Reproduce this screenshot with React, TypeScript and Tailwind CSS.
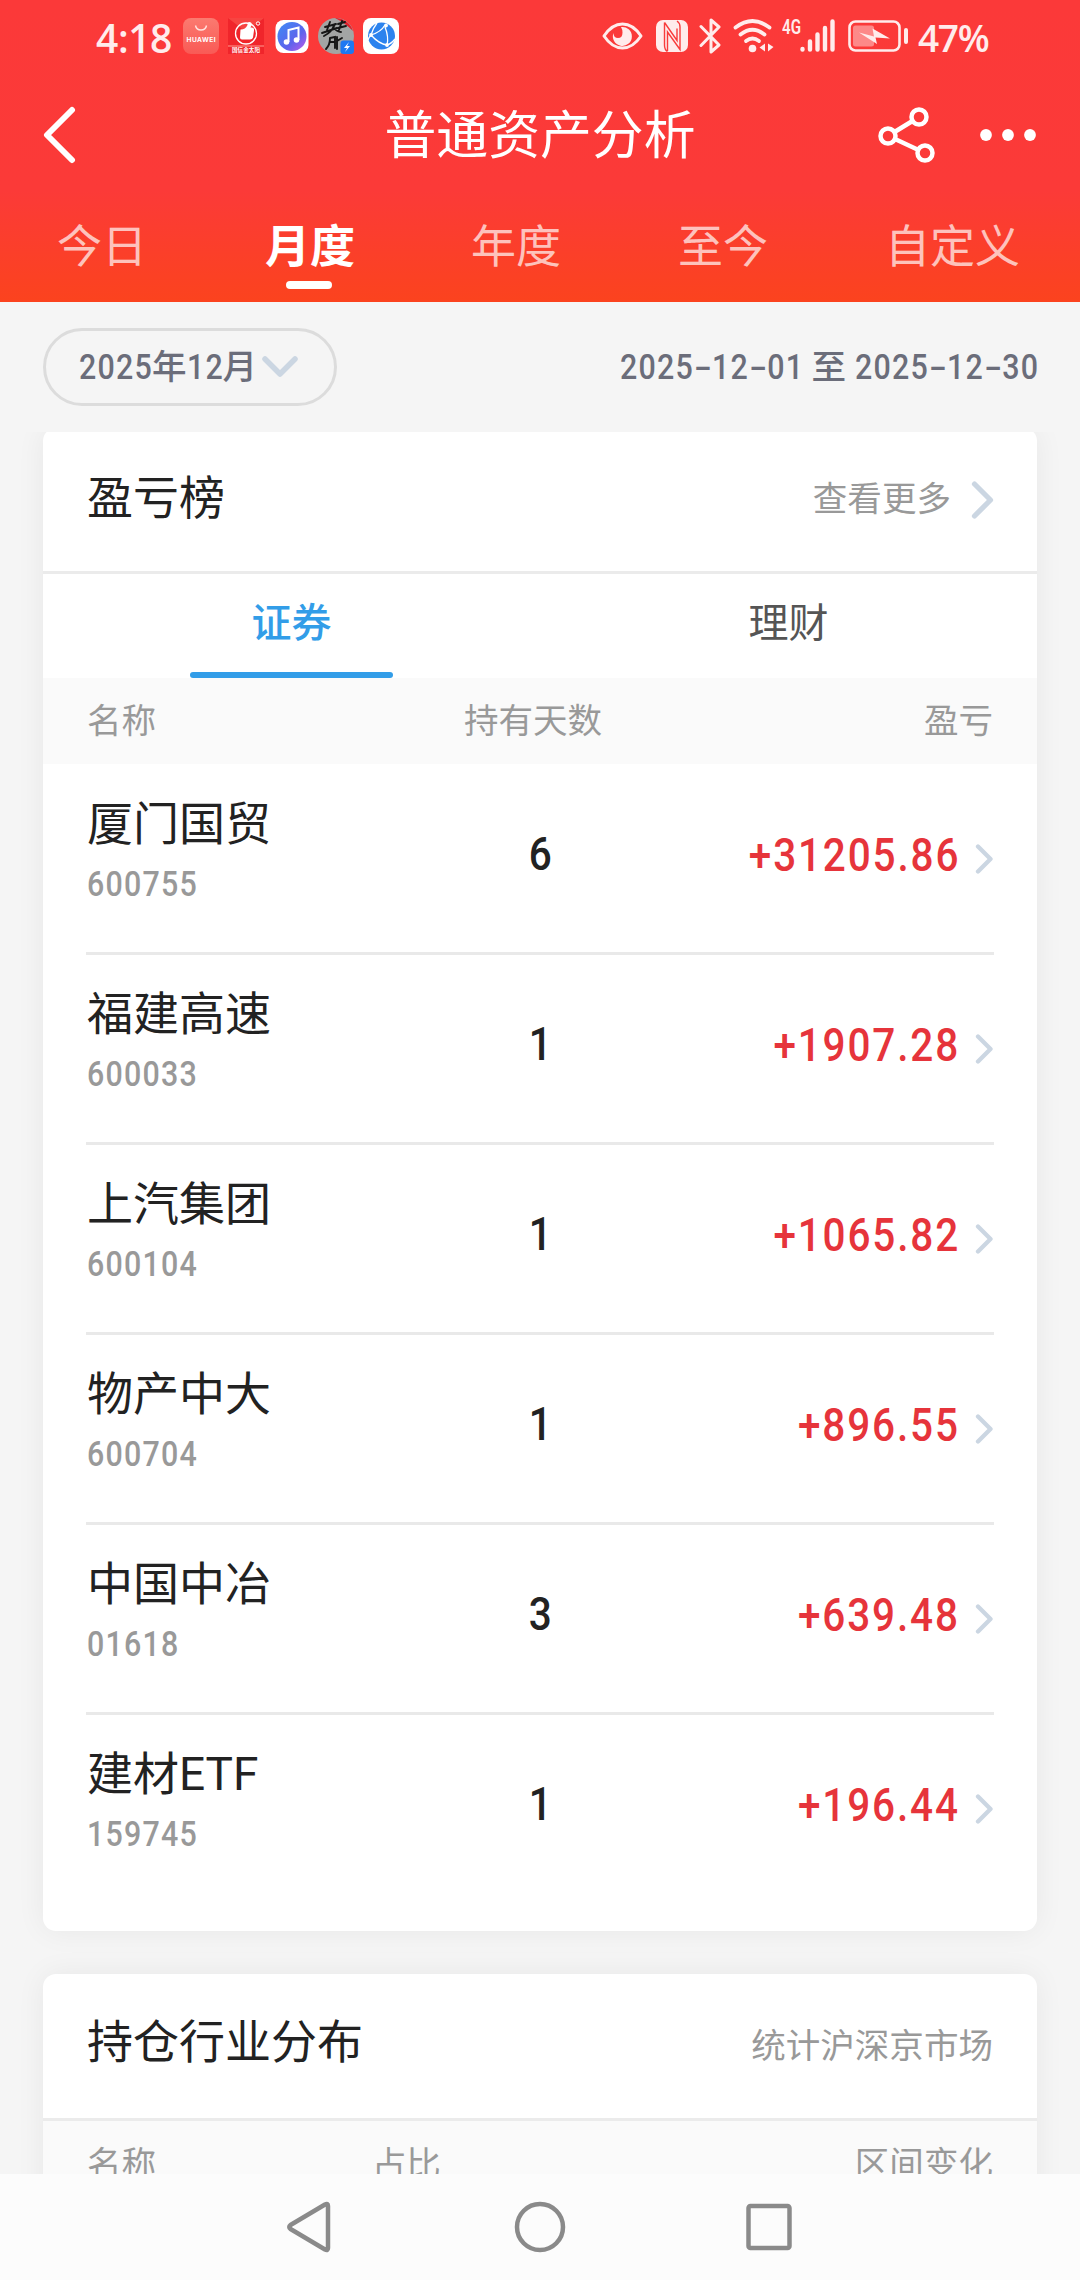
import React from "react";

const holdings = [
  { name: "厦门国贸", code: "600755", days: "6", profit: "+31205.86" },
  { name: "福建高速", code: "600033", days: "1", profit: "+1907.28" },
  { name: "上汽集团", code: "600104", days: "1", profit: "+1065.82" },
  { name: "物产中大", code: "600704", days: "1", profit: "+896.55" },
  { name: "中国中冶", code: "01618", days: "3", profit: "+639.48" },
  { name: "建材ETF", code: "159745", days: "1", profit: "+196.44" },
];

function StatusBar() {
  return (
    <div className="flex h-[72px] items-center pl-[96px] pr-[90px] text-[#ffecec]">
      <span className="w-[87px] whitespace-nowrap pt-[3px] font-['Open_Sans'] text-[39px] leading-none font-semibold tracking-[-0.400px]">4:18</span>
      <div className="flex items-center gap-[9px]">
        <svg width="36" height="36" viewBox="0 0 36 36">
          <defs>
            <linearGradient id="store" x1="0" y1="0" x2="0" y2="1">
              <stop offset="0" stopColor="#fb7a70" />
              <stop offset="1" stopColor="#f95a55" />
            </linearGradient>
          </defs>
          <rect width="36" height="36" rx="8" fill="url(#store)" />
          <path d="M12.5 7.5a5.6 5.6 0 0 0 11 0" fill="none" stroke="#ffe4e0" strokeWidth="1.4" />
          <text x="18" y="23.5" textAnchor="middle" fontSize="6.6" fontWeight="700" fontFamily="Inter" fill="#fff" textLength="29">HUAWEI</text>
        </svg>
        <svg width="36" height="36" viewBox="0 0 36 36">
          <rect width="36" height="36" fill="#f0252b" />
          <path d="M0 0h36L18 14z" fill="#fb5a50" opacity=".6" />
          <circle cx="18" cy="15.500" r="10.500" fill="none" stroke="#fff" strokeWidth="1.300" />
          <path d="M12.500 11.500q5 0 7-4.500 0-4 3.500-2.500 1.500 1-.5 5h1q3 0 2.500 3l-1 7q-.5 2-3 2h-8q-2 0-2-2z" fill="#fff" />
          <circle cx="30" cy="5.500" r="1.700" fill="none" stroke="#fff" strokeWidth="1" />
          <rect y="27.500" width="36" height="1" fill="#ff9b90" />
          <text x="18" y="34" textAnchor="middle" fontSize="5.500" fontWeight="700" fontFamily="Noto Sans CJK SC" fill="#fff" textLength="28">国信金太阳</text>
        </svg>
        <svg width="36" height="36" viewBox="0 0 36 36" className="ml-[1px] mr-[-1px]">
          <defs>
            <linearGradient id="music" x1="0" y1="0" x2="1" y2="1">
              <stop offset="0" stopColor="#3d8df5" />
              <stop offset=".6" stopColor="#5d63ec" />
              <stop offset="1" stopColor="#c05bea" />
            </linearGradient>
          </defs>
          <rect x="1.500" y="2" width="33" height="33" rx="8" fill="#fff" />
          <circle cx="18" cy="18.500" r="14.500" fill="url(#music)" />
          <path d="M14.500 24V12l10-2.500V22" fill="none" stroke="#fff" strokeWidth="2" />
          <circle cx="12.500" cy="24" r="2.800" fill="#fff" />
          <circle cx="22.500" cy="22" r="2.800" fill="#fff" />
        </svg>
        <svg width="36" height="36" viewBox="0 0 36 36">
          <circle cx="18" cy="18" r="18" fill="#a3a5a4" />
          <path d="M17 0a18 18 0 0 1 18 13Q27 5 17 0z" fill="#e0202c" />
          <path d="M7 9l11-3M12 4l-3 8M4 15l15-5M17 6q-3 8-11 12M15 9q4 5 8 5M20 6l7-2M24 3l-3 9M20 10l8-2M12 20q0 7-4 11M12 20l5-1v11M12 24h4M19 19v12M19 23l5-3" fill="none" stroke="#161616" strokeWidth="1.900" strokeLinecap="round" />
          <rect x="22.500" y="22.500" width="13.500" height="13.500" rx="3" fill="#1e78f2" />
          <path d="M31 24l-5 6h3l-2 4 5-6h-3z" fill="#fff" />
        </svg>
        <svg width="36" height="36" viewBox="0 0 36 36">
          <rect width="36" height="36" rx="8" fill="#fff" />
          <circle cx="18.500" cy="18" r="13.500" fill="#2c83ee" />
          <path d="M14 5Q10 10 8 17q8 9 16 10 2-8-2-18M8 17q10-3 14-10M8 17q-2 2-3 5M24 27q4-1 8-6" fill="none" stroke="#fff" strokeWidth="1.300" />
          <circle cx="8" cy="17" r="1.900" fill="#fff" />
          <circle cx="23" cy="7.500" r="1.900" fill="#fff" />
          <circle cx="24" cy="27" r="1.900" fill="#fff" />
        </svg>
      </div>
      <div className="ml-auto flex items-center">
        <svg width="41" height="30" viewBox="0 0 41 30" className="mr-[13px]">
          <path d="M2 15Q10 3 20.500 3T39 15Q31 27 20.500 27T2 15z" fill="none" stroke="currentColor" strokeWidth="3" strokeLinejoin="round" />
          <path d="M19 6a9.500 9.500 0 1 1-7.500 6q0 5 4.500 5t4.500-5.500q0-3-1.500-5.500z" fill="currentColor" />
        </svg>
        <svg width="32" height="32" viewBox="0 0 32 32" className="mr-[11px]">
          <rect width="32" height="32" rx="7" fill="currentColor" />
          <path d="M8.500 2.500V25q0 5 3 6.500M8.500 2.500L21 20.500V8.500M11.500 31V12L24 29.500V7q0-4-3-6" fill="none" stroke="#f93b3b" strokeWidth="1.400" />
        </svg>
        <svg width="23" height="36" viewBox="0 0 23 36" className="mr-[11px]">
          <path d="M2 8.500l18 18.500-8 7V2l8 7L2 27.500" fill="none" stroke="currentColor" strokeWidth="3" strokeLinejoin="round" strokeLinecap="round" />
        </svg>
        <svg width="42" height="34" viewBox="0 0 42 34" className="mr-[7px]">
          <g fill="none" stroke="currentColor" strokeWidth="3.800" strokeLinecap="round">
            <path d="M2.500 8.500Q19.500-4.500 36.500 8.500" />
            <path d="M7.500 15.500Q19.500 6 31.500 15.500" />
            <path d="M13 22Q19.500 17 26 22" />
          </g>
          <circle cx="19.500" cy="29.500" r="3.800" fill="currentColor" />
          <path d="M32 24.500v8l-5.500-4zM35 24.500v8l5.500-4.500z" fill="currentColor" />
        </svg>
        <svg width="54" height="44" viewBox="0 -5 54 44" className="mr-[12px]">
          <text x="0" y="15" fontSize="20" fontWeight="600" fontFamily="Roboto" fill="currentColor" textLength="19" lengthAdjust="spacingAndGlyphs">4G</text>
          <g stroke="currentColor" strokeWidth="4.400" strokeLinecap="round">
            <path d="M20.500 30v.5M28 22.500v8M35.500 15.500v15M43 9v21.500M50.500 2.500v28" />
          </g>
        </svg>
        <svg width="60" height="32" viewBox="0 0 60 32" className="mr-[10px]">
          <rect x="1.500" y="1.500" width="50" height="29" rx="6" fill="none" stroke="currentColor" strokeWidth="2.600" />
          <rect x="5" y="5.500" width="21" height="21" rx="2.500" fill="currentColor" opacity=".45" />
          <path d="M11 12.500L26 16.500 24.500 8.500 42 18.500 27.500 17.500 29 24z" fill="currentColor" />
          <rect x="56" y="8" width="4" height="16" rx="2" fill="currentColor" />
        </svg>
        <span className="w-[72px] pt-[2px] font-['Open_Sans'] text-[37px] leading-none font-semibold tracking-[-1.300px]">47%</span>
      </div>
    </div>
  );
}

function Chevron({ large = false }: { large?: boolean }) {
  return large ? (
    <svg width="23" height="40" viewBox="0 0 23 40" fill="none" stroke="#cbd6e2" strokeWidth="5.200" strokeLinecap="round" strokeLinejoin="round">
      <path d="M3.500 4l16 16-16 16" />
    </svg>
  ) : (
    <svg width="19" height="32" viewBox="0 0 19 32" fill="none" stroke="#cbd6e2" strokeWidth="4.300" strokeLinecap="round" strokeLinejoin="round">
      <path d="M3 3.500L15.500 16 3 28.500" />
    </svg>
  );
}

function PeriodTabs() {
  const idle = "text-white/70";
  return (
    <nav className="flex h-[104px] items-start pl-[57px] pt-[23px] text-[45px] leading-[54px]">
      <span className={"w-[208px] " + idle}>今日</span>
      <span className="flex w-[206px] flex-col font-bold text-white">
        月度
        <i className="ml-[21px] mt-[6px] h-[8px] w-[46px] rounded-full bg-white" />
      </span>
      <span className={"w-[207px] " + idle}>年度</span>
      <span className={"w-[207px] " + idle}>至今</span>
      <span className={idle}>自定义</span>
    </nav>
  );
}

function IsoDate({ value }: { value: string }) {
  return (
    <span className="inline-block w-[182px] origin-left scale-x-[0.88] tracking-[1.400px]">
      {value.split("-").map((part, i) => (
        <React.Fragment key={i}>
          {i > 0 && <span className="inline-block w-[20.500px] scale-x-[1.700] text-center tracking-normal">-</span>}
          {part}
        </React.Fragment>
      ))}
    </span>
  );
}

export default function App() {
  return (
    <div className="flex h-[2280px] w-[1080px] flex-col overflow-hidden bg-[#f5f5f5] font-[Roboto,'Noto_Sans_CJK_SC',sans-serif] text-[#222]">
      <header className="h-[302px] shrink-0 bg-[linear-gradient(#fb3939_0,#fb3a38_190px,#fb431e_302px)]">
        <StatusBar />
        <div className="grid h-[126px] grid-cols-3 items-center px-[43px]">
          <svg width="34" height="58" viewBox="0 0 34 58" fill="none" stroke="#fff" strokeWidth="6" strokeLinecap="round" strokeLinejoin="round">
            <path d="M29 4L4 29l25 25" />
          </svg>
          <h1 className="pt-[3px] text-center text-[51.840px] leading-[60px] whitespace-nowrap text-white">普通资产分析</h1>
          <div className="flex items-center justify-end gap-[44px]">
            <svg width="58" height="58" viewBox="0 0 58 58" fill="none" stroke="#fff" strokeWidth="4.500">
              <circle cx="11" cy="30" r="7.500" />
              <circle cx="42" cy="11" r="7.500" />
              <circle cx="48" cy="47" r="7.500" />
              <path d="M17.500 26L35.500 15M18 33l23.500 11" />
            </svg>
            <svg width="58" height="14" viewBox="0 0 58 14" fill="#fff">
              <circle cx="7" cy="7" r="5.900" />
              <circle cx="29" cy="7" r="5.900" />
              <circle cx="51" cy="7" r="5.900" />
            </svg>
          </div>
        </div>
        <PeriodTabs />
      </header>

      <main className="flex h-[1872px] shrink-0 flex-col overflow-hidden">
        <div className="relative z-10 flex h-[130px] shrink-0 items-center justify-between bg-[#f5f5f5] px-[43px] text-[34.560px] leading-[40px] font-medium text-[#6b6d7a]">
          <div className="flex h-[78px] w-[294px] items-center rounded-full border-[3px] border-[#dcdcdc] pl-[33px]">
            <span className="flex w-[182px] whitespace-nowrap">
              <span className="w-[73px] origin-left scale-x-[0.88] tracking-[1.400px]">2025</span>
              <span>年</span>
              <span className="w-[37px] origin-left scale-x-[0.88] tracking-[1.400px]">12</span>
              <span className="ml-[-1px]">月</span>
            </span>
            <svg width="38" height="24" viewBox="0 0 38 24" fill="none" stroke="#cbd6e2" strokeWidth="5.500" strokeLinecap="round" strokeLinejoin="round">
              <path d="M4 4l15 15L34 4" />
            </svg>
          </div>
          <div className="flex whitespace-nowrap">
            <IsoDate value="2025-12-01" />
            <span className="mx-[9px]">至</span>
            <IsoDate value="2025-12-30" />
          </div>
        </div>

        <section className="mx-[43px] mt-[-4px] h-[1503px] shrink-0 overflow-hidden rounded-[13px] bg-white shadow-[0_0_30px_rgba(0,0,0,0.06)]">
          <div className="flex h-[146px] items-center justify-between border-b-[3px] border-[#ebebeb] pr-[43px] pl-[44px]">
            <h2 className="pb-[3px] text-[46px] leading-[54px]">盈亏榜</h2>
            <div className="flex items-center gap-[20px] text-[34.560px] leading-[40px] text-[#999]">
              <span className="pb-[1px]">查看更多</span>
              <Chevron large />
            </div>
          </div>
          <div className="grid h-[104px] grid-cols-2 text-[40px] leading-[48px] text-[#555]">
            <div className="flex flex-col items-center justify-between pt-[26px] font-medium text-[#329de8]">
              证券
              <i className="h-[6px] w-[203px] rounded-full bg-[#329de8]" />
            </div>
            <div className="pt-[26px] text-center">理财</div>
          </div>
          <div className="grid h-[86px] grid-cols-3 items-center bg-[#fafafa] px-[43px] text-[34.560px] leading-[40px] text-[#999]">
            <span className="pl-[1px]">名称</span>
            <span className="pr-[14px] text-center">持有天数</span>
            <span className="pr-[1px] text-right">盈亏</span>
          </div>
          <div className="px-[43px] pt-[1px]">
            {holdings.map((h) => (
              <div key={h.code} className="grid h-[190px] grid-cols-3 border-b-[3px] border-[#e9e9e9] last:border-0">
                <div className="pt-[32px] pl-[1px]">
                  <div className="text-[46px] leading-[54px]">{h.name}</div>
                  <div className="mt-[13px] origin-left scale-x-[0.88] text-[34.560px] leading-[40px] font-medium tracking-[1.400px] text-[#999]">{h.code}</div>
                </div>
                <div className="scale-x-[0.88] pt-[62px] text-center text-[46px] leading-[54px] font-medium">{h.days}</div>
                <div className="flex items-start justify-end">
                  <span className="origin-right scale-x-[0.88] pt-[63px] text-[46px] leading-[54px] font-medium tracking-[2.100px] text-[#e6343b]">{h.profit}</span>
                  <div className="mt-[78px] ml-[15px]">
                    <Chevron />
                  </div>
                </div>
              </div>
            ))}
          </div>
        </section>

        <section className="mx-[43px] mt-[43px] h-[400px] shrink-0 overflow-hidden rounded-[13px] bg-white shadow-[0_0_30px_rgba(0,0,0,0.06)]">
          <div className="flex h-[147px] items-center justify-between border-b-[3px] border-[#ebebeb] pr-[43px] pl-[44px]">
            <h2 className="pb-[9px] text-[46px] leading-[54px]">持仓行业分布</h2>
            <span className="pr-[1px] text-[34.560px] leading-[40px] text-[#999]">统计沪深京市场</span>
          </div>
          <div className="grid h-[86px] grid-cols-3 items-center bg-[#fafafa] px-[43px] text-[34.560px] leading-[40px] text-[#999]">
            <span className="pl-[1px]">名称</span>
            <span className="ml-[-17px]">占比</span>
            <span className="pr-[1px] text-right">区间变化</span>
          </div>
        </section>
      </main>

      <footer className="flex h-[106px] shrink-0 items-center bg-[#fcfcfc] pl-[286px]">
        <svg width="46" height="54" viewBox="0 0 46 54" fill="none" stroke="#8a8a8a" strokeWidth="4.500" strokeLinejoin="round">
          <path d="M39 4.500Q42 3 42 6v42q0 3-3 1.500L4.500 29q-2.500-2 0-4z" />
        </svg>
        <svg width="54" height="54" viewBox="0 0 54 54" fill="none" stroke="#8a8a8a" strokeWidth="4.500" className="ml-[181px]">
          <circle cx="27" cy="27" r="23" />
        </svg>
        <svg width="48" height="48" viewBox="0 0 48 48" fill="none" stroke="#8a8a8a" strokeWidth="4.500" className="ml-[178px]">
          <rect x="3.500" y="3" width="41" height="42" rx="2" />
        </svg>
      </footer>
    </div>
  );
}
